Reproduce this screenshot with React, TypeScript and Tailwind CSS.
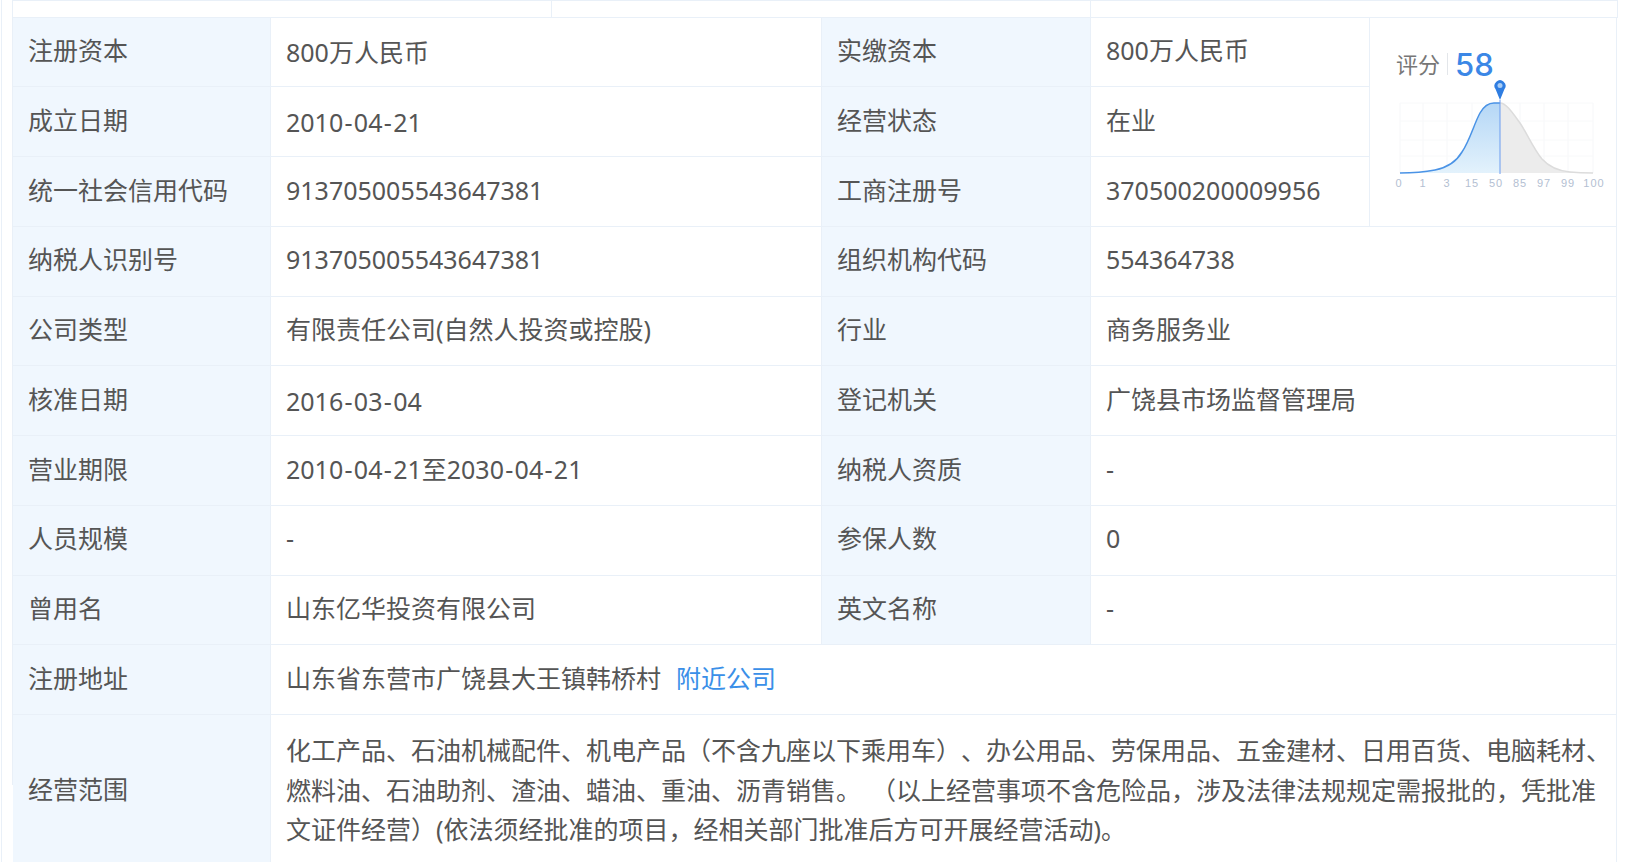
const label = "bg-[#f0f7fe] border-r border-b border-[#e9f0f8] pl-[15px] pb-[2px] flex items-center";
const value = "bg-white border-r border-b border-[#e9f0f8] pl-[15px] pb-[2px] flex items-center";

const rows: [string, string, string, string][] = [
  ["注册资本", "800万人民币", "实缴资本", "800万人民币"],
  ["成立日期", "2010-04-21", "经营状态", "在业"],
  ["统一社会信用代码", "913705005543647381", "工商注册号", "370500200009956"],
  ["纳税人识别号", "913705005543647381", "组织机构代码", "554364738"],
  ["公司类型", "有限责任公司(自然人投资或控股)", "行业", "商务服务业"],
  ["核准日期", "2016-03-04", "登记机关", "广饶县市场监督管理局"],
  ["营业期限", "2010-04-21至2030-04-21", "纳税人资质", "-"],
  ["人员规模", "-", "参保人数", "0"],
  ["曾用名", "山东亿华投资有限公司", "英文名称", "-"],
];

function Val({ text }: { text: string }) {
  if (text === "-" || !text.includes("-")) return <span>{text}</span>;
  const parts = text.split("-");
  return (
    <span>
      {parts.map((p, i) => (
        <span key={i}>
          {i > 0 && <span className="mx-[1.3px]">-</span>}
          {p}
        </span>
      ))}
    </span>
  );
}

function Chart() {
  const xs = [30, 53, 77, 102, 150, 174, 198, 223];
  const labels = ["0", "1", "3", "15", "50", "85", "97", "99", "100"];
  const lx = [29, 53, 77, 102, 126, 150, 174, 198, 224];
  const ys = [23, 41, 60, 76];
  const left = "M30 93 C45 93 55 92 65 90 C75 88 85 84 92 72 C100 60 104 44 110 33 C114 26 118 23 124 23 L130 23";
  const right = "M130 23 C136 23 142 32 150 43 C158 55 163 68 172 79 C180 88 190 91 200 92 C210 93 216 93 223 93";
  return (
    <svg width="246" height="118" viewBox="0 0 246 118" className="block">
      <defs>
        <linearGradient id="blueFill" x1="0" y1="0" x2="0" y2="1">
          <stop offset="0" stopColor="#b5d7f6" />
          <stop offset="1" stopColor="#e3f2fc" />
        </linearGradient>
      </defs>
      {xs.map((x) => (
        <line key={x} x1={x} x2={x} y1={23} y2={93} stroke="#f6f7f9" strokeWidth="1" />
      ))}
      {ys.map((y) => (
        <line key={y} x1={30} x2={223} y1={y} y2={y} stroke="#f8f9fa" strokeWidth="1" />
      ))}
      <path d={`${left} L130 93 Z`} fill="url(#blueFill)" />
      <path d={`${right} L130 93 Z`} fill="#ececec" />
      <path d={right} fill="none" stroke="#dcdcdc" strokeWidth="1.5" />
      <path d={left} fill="none" stroke="#4a93e6" strokeWidth="1.5" />
      <line x1={130} x2={130} y1={20} y2={94} stroke="#6a9cf0" strokeWidth="1" />
      <path d="M130 20 L125.5 9 A5.5 5.5 0 1 1 134.5 9 Z" fill="#2f7de1" />
      <circle cx={130} cy={5.5} r={2.5} fill="#a9cdf5" />
      {labels.map((t, i) => (
        <text key={i} x={lx[i]} y={106.5} textAnchor="middle" fontSize="11" fill="#b3c0d2" letterSpacing="1" fontFamily="Liberation Sans, sans-serif">
          {t}
        </text>
      ))}
    </svg>
  );
}

export default function App() {
  return (
    <div className="h-[862px] w-[1632px] overflow-hidden bg-white pl-[1px] pr-[14px] text-[25px] leading-[39.5px] text-[#555555] [font-family:'Noto_Sans','Noto_Sans_CJK_SC',sans-serif] [text-spacing-trim:space-all]">
      <div className="h-full border-l border-[#e9f0f8] pl-[10px]">
        <div className="grid grid-cols-[539px_539px_527px] h-[17.5px] border-t border-l border-r border-b border-[#e9f0f8] w-[1606px]">
          <div className="border-r border-[#e9f0f8]" />
          <div className="border-r border-[#e9f0f8]" />
          <div />
        </div>
        <div className="grid grid-cols-[258px_551px_269px_279px_247px] auto-rows-[69.75px] border-l border-[#e9f0f8] w-[1605px]">
          {rows.map((r, i) => (
            <div key={i} className="contents">
              <div className={label}>{r[0]}</div>
              <div className={value}>
                <span className={i === 0 || i === 1 || i === 5 ? "pt-[4px]" : ""}>
                  <Val text={r[1]} />
                </span>
              </div>
              <div className={label}>{r[2]}</div>
              <div className={`${value} ${i >= 3 ? "col-span-2" : ""}`}>{r[3]}</div>
              {i === 0 && (
                <div className="row-span-3 bg-white border-r border-b border-[#e9f0f8] flex flex-col">
                  <div className="flex items-center pl-[26px] pt-[31px] h-[62px]">
                    <span className="text-[22px] leading-[36px] text-[#777777]">评分</span>
                    <span className="w-px h-[22px] bg-[#e3e6ea] mx-[7px]" />
                    <span className="text-[31px] leading-[36px] pt-[2px] text-[#3b87e6] font-medium [font-family:'Inter',sans-serif]">58</span>
                  </div>
                  <Chart />
                </div>
              )}
            </div>
          ))}
          <div className={label}>注册地址</div>
          <div className={`${value} col-span-4`}>
            山东省东营市广饶县大王镇韩桥村
            <span className="ml-[15px] text-[#3a8fe8]">附近公司</span>
          </div>
          <div className="bg-[#f0f7fe] border-r border-[#e9f0f8] pl-[15px] pt-[2px] flex items-center h-[147px]">经营范围</div>
          <div className="col-span-4 bg-white border-r border-[#e9f0f8] pl-[15px] pt-[16px] pr-[5px] h-[147px] whitespace-nowrap">
            化工产品、石油机械配件、机电产品（不含九座以下乘用车）、办公用品、劳保用品、五金建材、日用百货、电脑耗材、
            <br />
            燃料油、石油助剂、渣油、蜡油、重油、沥青销售。<span className="ml-[10px]">（以上经营事项不含危险品，涉及法律法规规定需报批的，凭批准</span>
            <br />
            文证件经营）(依法须经批准的项目，经相关部门批准后方可开展经营活动)。
          </div>
        </div>
      </div>
    </div>
  );
}
